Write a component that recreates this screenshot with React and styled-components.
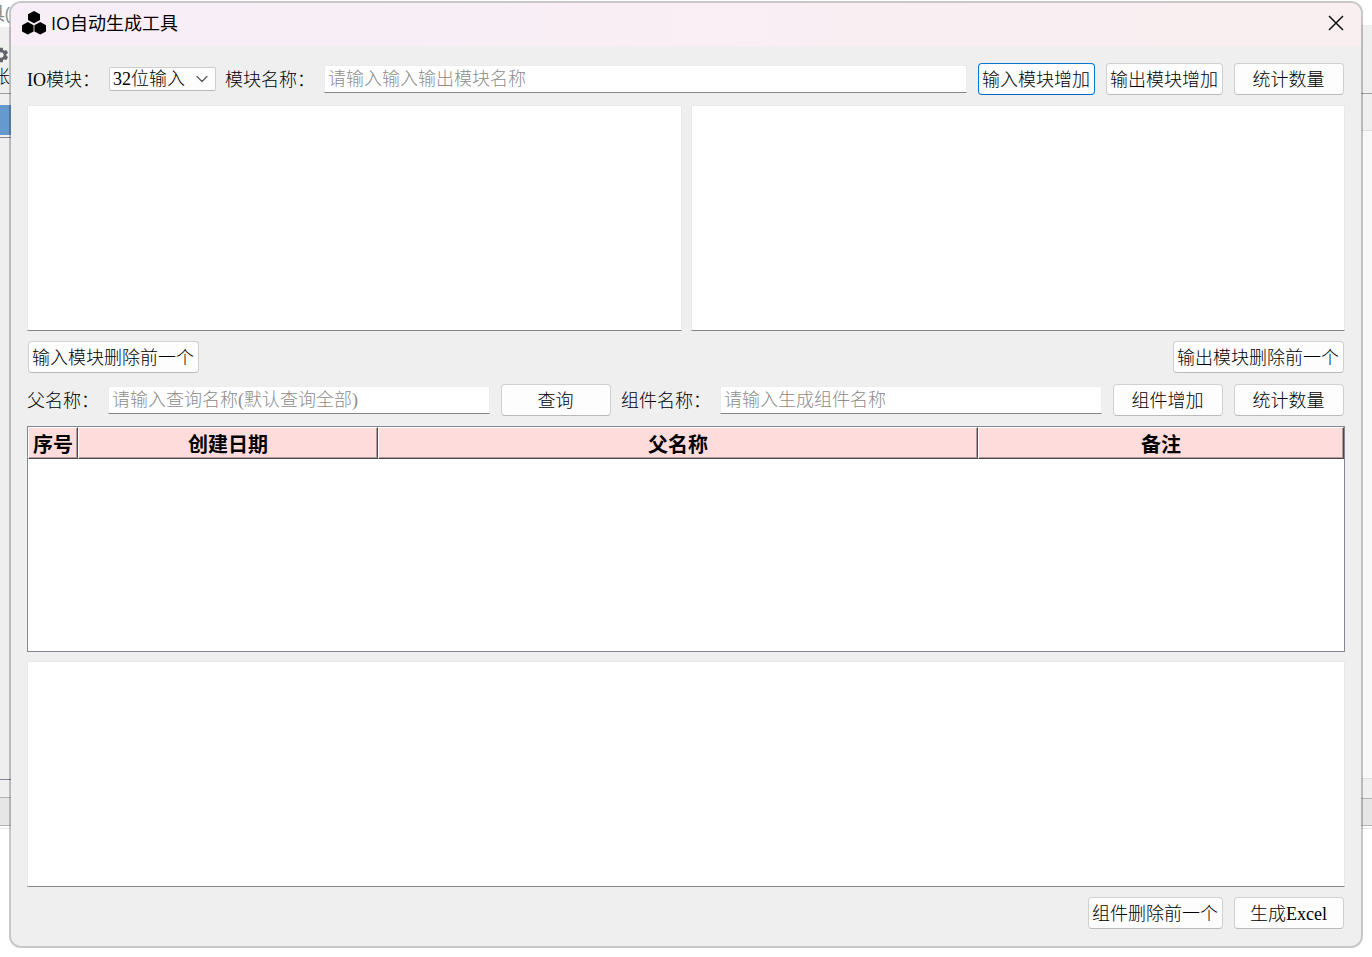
import React from "react";
import styled, { createGlobalStyle } from "styled-components";
import { ChevronDown } from "lucide-react";
import { MdSettings } from "react-icons/md";

export default function App() {
  return (
    <>
      <GlobalStyle />
      <Page>
        <Backdrop aria-hidden="true">
          <Side>
            <Strip $h={27} $bg="#ffffff">
              <MenuText>具(</MenuText>
            </Strip>
            <Strip $h={67} $bg="#efefef" $line="#a0a0a0">
              <Tool>
                <MdSettings size={18} color="#62626c" />
                <span>账</span>
              </Tool>
            </Strip>
            <Strip $h={11} $bg="#efefef" />
            <Strip $h={30} $bg="#6699cc" />
            <Strip $h={3} $bg="#efefef" $line="#828790" />
            <Strip $grow $bg="#efefef" $line="#828790" />
            <Strip $h={18} $bg="#efefef" $line="#b4b4b4" />
            <Strip $h={28} $bg="#e6e6e6" $line="#b4b4b4" />
            <Strip $h={3} $bg="#ffffff" $line="#e8e8e8" />
            <Strip $h={128} $bg="#ffffff" />
          </Side>
          <Side>
            <Strip $h={26} $bg="#ffffff" $line="#ececec" />
            <Strip $h={68} $bg="#efefef" $line="#a0a0a0" />
            <Strip $h={37} $bg="#efefef" $line="#e0e0e0" />
            <Strip $grow $bg="#f9f9f9" $line="#e0e0e0" />
            <Strip $h={20} $bg="#efefef" $line="#b4b4b4" />
            <Strip $h={27} $bg="#e6e6e6" $line="#b4b4b4" />
            <Strip $h={3} $bg="#ffffff" $line="#e8e8e8" />
            <Strip $h={128} $bg="#ffffff" />
          </Side>
        </Backdrop>

        <Window>
          <TitleBar>
            <Logo />
            <Title>IO自动生成工具</Title>
            <CloseButton aria-label="关闭">
              <svg width="16" height="16" viewBox="0 0 16 16">
                <path d="M1 1L15 15M15 1L1 15" stroke="#111" strokeWidth="1.5" />
              </svg>
            </CloseButton>
          </TitleBar>

          <Content>
            <Row>
              <Label htmlFor="ioType">IO模块：</Label>
              <SelectWrap>
                <Select id="ioType" defaultValue="in32">
                  <option value="in32">32位输入</option>
                  <option value="out32">32位输出</option>
                </Select>
                <ChevronDown size={20} strokeWidth={1.5} color="#5a5a5a" />
              </SelectWrap>
              <Label htmlFor="moduleName">模块名称：</Label>
              <Input id="moduleName" placeholder="请输入输入输出模块名称" />
              <Button $primary>输入模块增加</Button>
              <Button>输出模块增加</Button>
              <Button>统计数量</Button>
            </Row>

            <Panes>
              <TextArea aria-label="输入模块" />
              <TextArea aria-label="输出模块" />
            </Panes>

            <Row $justify="space-between">
              <Button>输入模块删除前一个</Button>
              <Button>输出模块删除前一个</Button>
            </Row>

            <Row>
              <Label htmlFor="parentName">父名称：</Label>
              <Input
                id="parentName"
                placeholder="请输入查询名称(默认查询全部)"
              />
              <Button>查询</Button>
              <Label htmlFor="partName">组件名称：</Label>
              <Input id="partName" placeholder="请输入生成组件名称" />
              <Button>组件增加</Button>
              <Button>统计数量</Button>
            </Row>

            <TableFrame>
              <Table>
                <thead>
                  <tr>
                    <Th $w={50}>序号</Th>
                    <Th $w={300}>创建日期</Th>
                    <Th $w={600}>父名称</Th>
                    <Th>备注</Th>
                  </tr>
                </thead>
                <tbody />
              </Table>
            </TableFrame>

            <Panes>
              <TextArea aria-label="组件" />
            </Panes>

            <Row $justify="flex-end">
              <Button>组件删除前一个</Button>
              <Button>生成Excel</Button>
            </Row>
          </Content>
        </Window>
      </Page>
    </>
  );
}

function Logo() {
  return (
    <svg width="24" height="24" viewBox="0 0 24 24" fill="#000">
      <path d="M12 0L18 3.2V9L12 12.2L6 9V3.2Z" />
      <path d="M5.8 11L11.6 14.2V20.4L5.8 23.6L0 20.4V14.2Z" />
      <path d="M18.2 11L24 14.2V20.4L18.2 23.6L12.4 20.4V14.2Z" />
    </svg>
  );
}

const GlobalStyle = createGlobalStyle`
  * {
    box-sizing: border-box;
  }
  body {
    margin: 0;
    background: #ffffff;
    color: #000000;
    font-family: "Liberation Serif", "Noto Sans CJK SC", serif;
    font-size: 18px;
    font-weight: 300;
  }
  button, input, select, textarea {
    font: inherit;
    color: inherit;
  }
`;

const Page = styled.div`
  position: relative;
  display: flex;
  min-height: 100vh;
  padding: 1px 9px 9px;
`;

const Backdrop = styled.div`
  position: absolute;
  inset: 0;
  display: flex;
  overflow: hidden;
`;

const Side = styled.div`
  flex: 1;
  display: flex;
  flex-direction: column;
`;

const Strip = styled.div`
  flex: ${(p) => (p.$grow ? "1" : `0 0 ${p.$h}px`)};
  background: ${(p) => p.$bg};
  border-bottom: ${(p) => (p.$line ? `1px solid ${p.$line}` : "none")};
`;

const MenuText = styled.div`
  margin-left: -13px;
  color: #8a8a8a;
  font-family: "Open Sans", "Noto Sans CJK SC", sans-serif;
  font-weight: 400;
  line-height: 26px;
`;

const Tool = styled.div`
  display: flex;
  flex-direction: column;
  align-items: flex-start;
  margin-left: -8px;
  padding-top: 19px;
  line-height: 26px;
`;

const Window = styled.main`
  position: relative;
  flex: 1;
  min-width: 0;
  display: flex;
  flex-direction: column;
  overflow: hidden;
  background: #efefef;
  background-clip: padding-box;
  border: 2px solid rgba(0, 0, 0, 0.22);
  border-radius: 12px;
`;

const TitleBar = styled.header`
  display: flex;
  align-items: center;
  gap: 5px;
  height: 43px;
  padding: 0 17px 4px 11px;
  background: linear-gradient(90deg, #f8eef8, #f9eff0);
`;

const Title = styled.h1`
  flex: 1;
  margin: 0;
  font-family: "Open Sans", "Noto Sans CJK SC", sans-serif;
  font-size: 18px;
  font-weight: 400;
  line-height: 24px;
`;

const CloseButton = styled.button`
  display: flex;
  padding: 0;
  border: none;
  background: none;
`;

const Content = styled.div`
  flex: 1;
  display: flex;
  flex-direction: column;
  gap: 9px;
  padding: 16px;
`;

const Row = styled.div`
  display: flex;
  align-items: center;
  justify-content: ${(p) => p.$justify || "flex-start"};
  gap: 9px;
`;

const Label = styled.label`
  flex: none;
  padding-bottom: 2px;
  white-space: nowrap;
`;

const SelectWrap = styled.div`
  position: relative;
  flex: none;
  width: 107px;

  svg {
    position: absolute;
    top: 2px;
    right: 4px;
    pointer-events: none;
  }
`;

const Select = styled.select`
  display: block;
  appearance: none;
  width: 100%;
  height: 24px;
  padding: 0 3px;
  border: 1px solid #cfcfcf;
  border-bottom-color: #b8b8b8;
  border-radius: 2px;
  background: #fdfdfd;
  line-height: 22px;
`;

const Input = styled.input`
  flex: 1;
  min-width: 0;
  height: 28px;
  margin-right: 1px;
  padding: 1px 3px 0;
  border: 1px solid #ececec;
  border-bottom-color: #868686;
  background: #ffffff;
  outline: none;

  &::placeholder {
    color: #8c8c8c;
  }
`;

const Button = styled.button`
  flex: none;
  min-width: 110px;
  height: 32px;
  margin: 1px;
  padding: 0 4px 2px 3px;
  border: 1px solid ${(p) => (p.$primary ? "#0078d4" : "#d0d0d0")};
  border-bottom-color: ${(p) => (p.$primary ? "#0067c0" : "#bababa")};
  border-radius: 4px;
  background: #fdfdfd;
  white-space: nowrap;
`;

const Panes = styled.div`
  flex: 1 1 226px;
  display: flex;
  gap: 9px;
`;

const TextArea = styled.textarea`
  flex: 1;
  min-width: 0;
  padding: 3px;
  border: 1px solid #e9e9e9;
  border-bottom-color: #868686;
  background: #ffffff;
  resize: none;
  outline: none;
`;

const TableFrame = styled.div`
  flex: 1 1 226px;
  border: 1px solid #828790;
  background: #ffffff;
`;

const Table = styled.table`
  width: 100%;
  table-layout: fixed;
  border-collapse: separate;
  border-spacing: 0;
`;

const Th = styled.th`
  width: ${(p) => (p.$w ? `${p.$w}px` : "auto")};
  height: 32px;
  padding: 2px 0 0;
  border: 1px solid #4f484a;
  border-top-color: #ffffff;
  border-left-color: #ffffff;
  box-shadow: inset -1px -1px 0 #b09a9a;
  background: #ffdcdc;
  font-family: "Noto Sans CJK SC", sans-serif;
  font-size: 20px;
  font-weight: 700;
  line-height: 28px;
`;
